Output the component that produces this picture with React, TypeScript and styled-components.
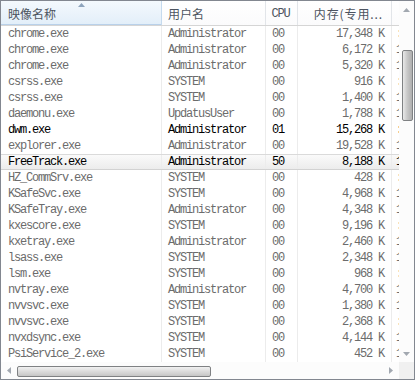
import React from 'react';
import styled, { createGlobalStyle, css } from 'styled-components';

const GlobalStyle = createGlobalStyle`
  html, body {
    margin: 0;
    padding: 0;
    background: #ffffff;
  }
  body {
    width: 415px;
    height: 380px;
    overflow: hidden;
  }
`;

type Proc = {
  name: string;
  user: string;
  cpu: string;
  mem: string;
  dark?: boolean;
  hot?: boolean;
};

const procs: Proc[] = [
  { name: 'chrome.exe', user: 'Administrator', cpu: '00', mem: '17,348 K' },
  { name: 'chrome.exe', user: 'Administrator', cpu: '00', mem: '6,172 K' },
  { name: 'chrome.exe', user: 'Administrator', cpu: '00', mem: '5,320 K' },
  { name: 'csrss.exe', user: 'SYSTEM', cpu: '00', mem: '916 K' },
  { name: 'csrss.exe', user: 'SYSTEM', cpu: '00', mem: '1,400 K' },
  { name: 'daemonu.exe', user: 'UpdatusUser', cpu: '00', mem: '1,788 K' },
  { name: 'dwm.exe', user: 'Administrator', cpu: '01', mem: '15,268 K', dark: true },
  { name: 'explorer.exe', user: 'Administrator', cpu: '00', mem: '19,528 K' },
  { name: 'FreeTrack.exe', user: 'Administrator', cpu: '50', mem: '8,188 K', dark: true, hot: true },
  { name: 'HZ_CommSrv.exe', user: 'SYSTEM', cpu: '00', mem: '428 K' },
  { name: 'KSafeSvc.exe', user: 'SYSTEM', cpu: '00', mem: '4,968 K' },
  { name: 'KSafeTray.exe', user: 'Administrator', cpu: '00', mem: '4,348 K' },
  { name: 'kxescore.exe', user: 'SYSTEM', cpu: '00', mem: '9,196 K' },
  { name: 'kxetray.exe', user: 'Administrator', cpu: '00', mem: '2,460 K' },
  { name: 'lsass.exe', user: 'SYSTEM', cpu: '00', mem: '2,348 K' },
  { name: 'lsm.exe', user: 'SYSTEM', cpu: '00', mem: '968 K' },
  { name: 'nvtray.exe', user: 'Administrator', cpu: '00', mem: '4,700 K' },
  { name: 'nvvsvc.exe', user: 'SYSTEM', cpu: '00', mem: '1,380 K' },
  { name: 'nvvsvc.exe', user: 'SYSTEM', cpu: '00', mem: '2,368 K' },
  { name: 'nvxdsync.exe', user: 'SYSTEM', cpu: '00', mem: '4,144 K' },
  { name: 'PsiService_2.exe', user: 'SYSTEM', cpu: '00', mem: '452 K' },
];

const COLUMNS = '161px 104px 32px 94px 7px';

const Window = styled.div`
  box-sizing: border-box;
  width: 415px;
  height: 380px;
  border: 1px solid #828790;
  display: grid;
  grid-template-columns: 1fr 15px;
  grid-template-rows: 1fr 17px;
  background: #ffffff;
  overflow: hidden;
`;

const ListArea = styled.div`
  display: flex;
  flex-direction: column;
  overflow: hidden;
`;

const HeaderRow = styled.div`
  display: grid;
  grid-template-columns: ${COLUMNS};
  height: 25px;
  box-sizing: border-box;
  border-bottom: 1px solid #d5d5d5;
  background: linear-gradient(#ffffff, #fbfbfc);
`;

const HeaderCell = styled.div<{
  $align?: 'left' | 'center' | 'right';
  $sorted?: boolean;
  $mono?: boolean;
  $spaced?: boolean;
}>`
  position: relative;
  box-sizing: border-box;
  display: flex;
  align-items: center;
  justify-content: ${({ $align }) =>
    $align === 'right' ? 'flex-end' : $align === 'center' ? 'center' : 'flex-start'};
  padding: 1px 8px 0 6px;
  border-right: 1px solid #e2e5e9;
  color: #4c5460;
  font-family: ${({ $mono }) =>
    $mono ? '"Liberation Mono", monospace' : '"Noto Sans CJK SC", sans-serif'};
  font-size: 12px;
  letter-spacing: ${({ $mono, $spaced }) => ($mono ? '-1.2px' : $spaced ? '0.9px' : '0')};
  white-space: nowrap;
  overflow: hidden;
  ${({ $sorted }) =>
    $sorted &&
    css`
      padding-left: 7px;
      background: linear-gradient(#f4f9fd, #e2eef9);
      border-right-color: #c5daee;
      box-shadow: inset 0 -1px 0 #b9d1ea;
    `}
`;

const SortArrow = styled.svg`
  position: absolute;
  top: 2px;
  left: 77px;
`;

const Body = styled.div`
  display: flex;
  flex-direction: column;
`;

const Row = styled.div<{ $dark?: boolean; $hot?: boolean }>`
  display: grid;
  grid-template-columns: ${COLUMNS};
  height: 16px;
  box-sizing: border-box;
  color: ${({ $dark }) => ($dark ? '#000000' : '#6c6c6c')};
  font-family: 'Liberation Mono', monospace;
  font-size: 12px;
  letter-spacing: -1.2px;
  ${({ $hot }) =>
    $hot &&
    css`
      background: linear-gradient(#fafafa, #ececec);
      border-top: 1px solid #dadada;
      border-bottom: 1px solid #d2d2d2;
    `}
`;

const Cell = styled.div<{ $right?: boolean }>`
  box-sizing: border-box;
  display: flex;
  align-items: center;
  justify-content: ${({ $right }) => ($right ? 'flex-end' : 'flex-start')};
  padding: 0 ${({ $right }) => ($right ? '7px' : '0')} 0 6px;
  border-right: 1px solid #ececec;
  white-space: nowrap;
  overflow: hidden;
  &:first-child {
    padding-left: 7px;
  }
  &:last-child {
    border-right: none;
    padding-left: 4px;
  }
`;

const VScroll = styled.div`
  grid-row: 1;
  grid-column: 2;
  display: flex;
  flex-direction: column;
  background: #fcfcfc;
`;

const HScroll = styled.div`
  grid-row: 2;
  grid-column: 1;
  display: flex;
  align-items: center;
  background: #fcfcfc;
`;

const Corner = styled.div`
  grid-row: 2;
  grid-column: 2;
  background: #f0f0f0;
`;

const ArrowButton = styled.div<{ $size: number }>`
  flex: 0 0 ${({ $size }) => $size}px;
  align-self: stretch;
  display: flex;
  align-items: center;
  justify-content: center;
`;

const VTrack = styled.div`
  flex: 1;
  display: flex;
  flex-direction: column;
  align-items: center;
  padding-top: 32px;
`;

const VThumb = styled.div`
  width: 11px;
  height: 71px;
  margin-left: 1px;
  box-sizing: border-box;
  border: 1px solid #7f8183;
  border-radius: 2px;
  background: linear-gradient(90deg, #e9e9e9, #c9c9c9 45%, #aeaeae);
`;

const HTrack = styled.div`
  flex: 1;
  display: flex;
  align-items: center;
  align-self: stretch;
  padding-top: 1px;
`;

const HThumb = styled.div`
  width: 194px;
  height: 11px;
  box-sizing: border-box;
  border: 1px solid #7f8183;
  border-radius: 2px;
  background: linear-gradient(#f1f1f1, #d9d9d9 55%, #c6c6c6);
`;

const Tri: React.FC<{ dir: 'up' | 'down' | 'left' | 'right' }> = ({ dir }) => {
  const vertical = dir === 'up' || dir === 'down';
  const w = vertical ? 7 : 4;
  const h = vertical ? 4 : 7;
  const points = {
    up: '3.5,0 7,4 0,4',
    down: '0,0 7,0 3.5,4',
    left: '4,0 4,7 0,3.5',
    right: '0,0 4,3.5 0,7',
  }[dir];
  return (
    <svg width={w} height={h} viewBox={`0 0 ${w} ${h}`}>
      <polygon points={points} fill="#a2a8b0" />
    </svg>
  );
};

const App: React.FC = () => {
  return (
    <>
      <GlobalStyle />
      <Window>
        <ListArea>
          <HeaderRow>
            <HeaderCell $sorted>
              <SortArrow width="7" height="4" viewBox="0 0 7 4">
                <polygon points="3.5,0 7,4 0,4" fill="#8ea4bc" />
              </SortArrow>
              映像名称
            </HeaderCell>
            <HeaderCell>用户名</HeaderCell>
            <HeaderCell $align="center" $mono>
              CPU
            </HeaderCell>
            <HeaderCell $align="right" $spaced>
              内存(专用...
            </HeaderCell>
            <HeaderCell $mono>:</HeaderCell>
          </HeaderRow>
          <Body>
            {procs.map((p, i) => (
              <Row key={i} $dark={p.dark} $hot={p.hot}>
                <Cell>{p.name}</Cell>
                <Cell>{p.user}</Cell>
                <Cell>{p.cpu}</Cell>
                <Cell $right>{p.mem}</Cell>
                <Cell>{i % 3 === 0 ? ':' : '1'}</Cell>
              </Row>
            ))}
          </Body>
        </ListArea>
        <VScroll>
          <ArrowButton $size={17}>
            <Tri dir="up" />
          </ArrowButton>
          <VTrack>
            <VThumb />
          </VTrack>
          <ArrowButton $size={17}>
            <Tri dir="down" />
          </ArrowButton>
        </VScroll>
        <HScroll>
          <ArrowButton $size={16}>
            <Tri dir="left" />
          </ArrowButton>
          <HTrack>
            <HThumb />
          </HTrack>
          <ArrowButton $size={17}>
            <Tri dir="right" />
          </ArrowButton>
        </HScroll>
        <Corner />
      </Window>
    </>
  );
};

export default App;
